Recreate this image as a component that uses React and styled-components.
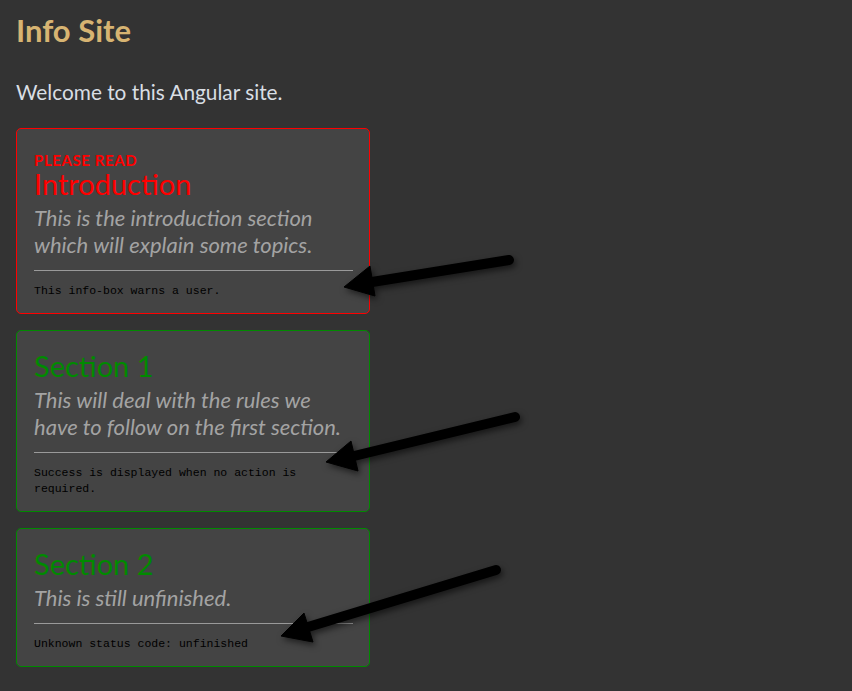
import React from "react";
import styled, { createGlobalStyle } from "styled-components";

const GlobalStyle = createGlobalStyle`
  html, body {
    margin: 0;
    padding: 0;
    background: #333;
  }
  body {
    font-family: Lato, "Open Sans", sans-serif;
  }
`;

const Page = styled.div`
  position: relative;
  min-height: 691px;
  padding: 12px 16px 16px;
  box-sizing: border-box;
  background: #333;
`;

const Heading = styled.h1`
  margin: 0;
  font-size: 31px;
  line-height: 36px;
  font-weight: 700;
  color: #d7b472;
`;

const Welcome = styled.p`
  margin: 32px 0 24px;
  font-size: 20.8px;
  line-height: 24px;
  color: #d9dee4;
`;

const CardList = styled.div`
  display: flex;
  flex-direction: column;
  gap: 16px;
  width: 354px;
`;

const tones = {
  warn: "#ff0000",
  success: "#008a00",
  unknown: "#008a00",
};

const Card = styled.section`
  background: #444;
  border: 1px solid ${(p) => tones[p.$status]};
  border-radius: 5px;
  padding: 20px 16px 14px 17px;
  color: ${(p) => tones[p.$status]};
`;

const Label = styled.div`
  margin: 3px 0 0;
  font-size: 15px;
  line-height: 17px;
  font-weight: 700;
  text-transform: uppercase;
  letter-spacing: 0.6px;
`;

const Title = styled.h2`
  margin: 0;
  font-size: 29px;
  line-height: 30px;
  font-weight: 400;
`;

const Desc = styled.p`
  margin: 5px 0 0;
  font-size: 22px;
  line-height: 27px;
  font-style: italic;
  color: #a3a3a3;
`;

const Rule = styled.hr`
  margin: 12px 0 0;
  border: 0;
  border-top: 1px solid #9a9a9a;
  height: 0;
`;

const Footer = styled.div`
  margin-top: 12px;
  font-family: "Liberation Mono", "DejaVu Sans Mono", monospace;
  font-size: 11.5px;
  line-height: 16px;
  color: #000;
`;

const ArrowLayer = styled.svg`
  position: absolute;
  left: 0;
  top: 0;
  width: 852px;
  height: 691px;
  pointer-events: none;
  filter: drop-shadow(2px 3px 3px rgba(0, 0, 0, 0.55));
`;

const sections = [
  {
    status: "warn",
    label: "Please read",
    title: "Introduction",
    desc: "This is the introduction section which will explain some topics.",
    footer: "This info-box warns a user.",
  },
  {
    status: "success",
    title: "Section 1",
    desc: "This will deal with the rules we have to follow on the first section.",
    footer: "Success is displayed when no action is required.",
  },
  {
    status: "unknown",
    title: "Section 2",
    desc: "This is still unfinished.",
    footer: "Unknown status code: unfinished",
  },
];

const arrows = [
  { tail: [509, 260], neck: [372, 282], head: "344,287 370,266 375,296" },
  { tail: [515, 417], neck: [354, 456], head: "326,462 351,441 358,471" },
  { tail: [496, 570], neck: [308, 627], head: "281,636 304,613 313,642" },
];

function Arrows() {
  return (
    <ArrowLayer viewBox="0 0 852 691">
      {arrows.map((a, i) => (
        <g key={i} fill="#000" stroke="#000">
          <line
            x1={a.tail[0]}
            y1={a.tail[1]}
            x2={a.neck[0]}
            y2={a.neck[1]}
            strokeWidth="10"
            strokeLinecap="round"
          />
          <polygon points={a.head} strokeWidth="1" strokeLinejoin="round" />
        </g>
      ))}
    </ArrowLayer>
  );
}

export default function App() {
  return (
    <Page>
      <GlobalStyle />
      <Heading>Info Site</Heading>
      <Welcome>Welcome to this Angular site.</Welcome>
      <CardList>
        {sections.map((s, i) => (
          <Card key={i} $status={s.status}>
            {s.label && <Label>{s.label}</Label>}
            <Title>{s.title}</Title>
            <Desc>{s.desc}</Desc>
            <Rule />
            <Footer>{s.footer}</Footer>
          </Card>
        ))}
      </CardList>
      <Arrows />
    </Page>
  );
}
